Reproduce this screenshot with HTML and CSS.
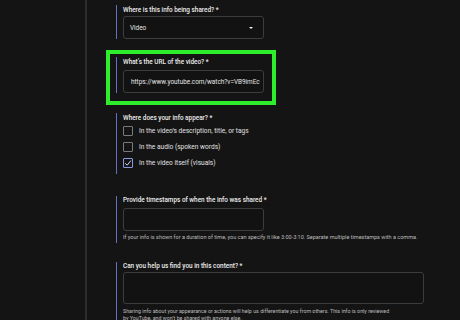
FILE: index.html
```html
<!DOCTYPE html>
<html lang="en">
<head>
    <meta charset="UTF-8">
    <meta name="viewport" content="width=device-width, initial-scale=1.0">
    <title>Privacy complaint</title>
    <link rel="stylesheet" href="styles.css">
</head>
<body>
    <div class="page">
        <div class="sidebar"></div>
        <div class="form">
            <div class="field first">
                <div class="label">Where is this info being shared? *</div>
                <div class="select">
                    <span>Video</span>
                    <span class="arrow"></span>
                </div>
            </div>

            <div class="highlight">
                <div class="field">
                    <div class="label">What’s the URL of the video? *</div>
                    <div class="input">https://www.youtube.com/watch?v=VB9imEc</div>
                </div>
            </div>

            <div class="field checks">
                <div class="label">Where does your info appear? *</div>
                <div class="check-row"><span class="box"></span>In the video’s description, title, or tags</div>
                <div class="check-row"><span class="box"></span>In the audio (spoken words)</div>
                <div class="check-row">
                    <span class="box checked">
                        <svg width="8" height="8" viewBox="0 0 8 8"><path d="M1.2 4.2 L3.2 6.2 L6.9 1.6" fill="none" stroke="#c9d4ff" stroke-width="1"/></svg>
                    </span>In the video itself (visuals)
                </div>
            </div>

            <div class="field stamps">
                <div class="label">Provide timestamps of when the info was shared *</div>
                <div class="input"></div>
                <div class="hint">If your info is shown for a duration of time, you can specify it like 3:00-3:10. Separate multiple timestamps with a comma.</div>
            </div>

            <div class="field find">
                <div class="label">Can you help us find you in this content? *</div>
                <div class="textarea"></div>
                <div class="hint">Sharing info about your appearance or actions will help us differentiate you from others. This info is only reviewed by YouTube, and won’t be shared with anyone else.</div>
            </div>
        </div>
    </div>
</body>
</html>
```

FILE: styles.css
```css
body {
    margin: 0;
    background-color: #141414;
    font-family: Roboto, "Noto Sans", sans-serif;
    color: #e6e6e6;
    overflow: hidden;
}
.page {
    display: flex;
    height: 320px;
    overflow: hidden;
}
.sidebar {
    width: 85px;
    border-right: 2px solid #2c2c2c;
    flex-shrink: 0;
}
.form {
    padding-left: 19px;
    flex: 1;
}
.field {
    border-left: 1px solid #6670c4;
    padding-left: 6px;
    margin-left: 10px;
}
.highlight .field {
    margin-left: 6px;
}
.label {
    font-size: 6.4px;
    line-height: 8px;
    font-weight: 500;
    color: #ececec;
}
.first {
    margin-top: 5px;
}
.first .label {
    line-height: 10px;
}
.select, .input {
    box-sizing: border-box;
    width: 141px;
    height: 23px;
    border: 1px solid #3d3d3d;
    border-radius: 3px;
    background-color: #121212;
    font-size: 6.4px;
    display: flex;
    align-items: center;
    padding-left: 6px;
}
.select {
    margin-top: 1px;
    justify-content: space-between;
    padding-right: 10px;
}
.arrow {
    width: 0;
    height: 0;
    border-left: 2px solid transparent;
    border-right: 2px solid transparent;
    border-top: 2px solid #f0f0f0;
}
.highlight {
    width: 162px;
    margin-top: 11px;
    border: 4px solid #2ded2d;
    padding: 3px 0 8px 0;
}
.highlight .label {
    line-height: 10px;
}
.highlight .input {
    margin-top: 3px;
    padding-left: 7px;
    white-space: nowrap;
    overflow: hidden;
}
.checks {
    margin-top: 8px;
    padding-bottom: 3px;
}
.checks .label {
    line-height: 10px;
}
.check-row {
    height: 16px;
    display: flex;
    align-items: center;
    font-size: 6.6px;
    color: #e2e2e2;
}
.box {
    box-sizing: border-box;
    width: 10px;
    height: 10px;
    border: 1px solid #7a7a7a;
    border-radius: 1px;
    margin-right: 6px;
    display: flex;
    align-items: center;
    justify-content: center;
}
.box.checked {
    border-color: #8d97e6;
}
.stamps {
    margin-top: 22px;
    padding-bottom: 2px;
}
.stamps .input {
    margin-top: 4px;
}
.hint {
    font-size: 5.5px;
    line-height: 8px;
    color: #bdbdbd;
    margin-top: 2px;
}
.find {
    margin-top: 19px;
}
.textarea {
    box-sizing: border-box;
    width: 301px;
    height: 32px;
    margin-top: 2px;
    border: 1px solid #3d3d3d;
    border-radius: 3px;
    background-color: #121212;
}
.find .hint {
    font-size: 5.3px;
    line-height: 7px;
    margin-top: 4px;
    max-width: 268px;
}
```
